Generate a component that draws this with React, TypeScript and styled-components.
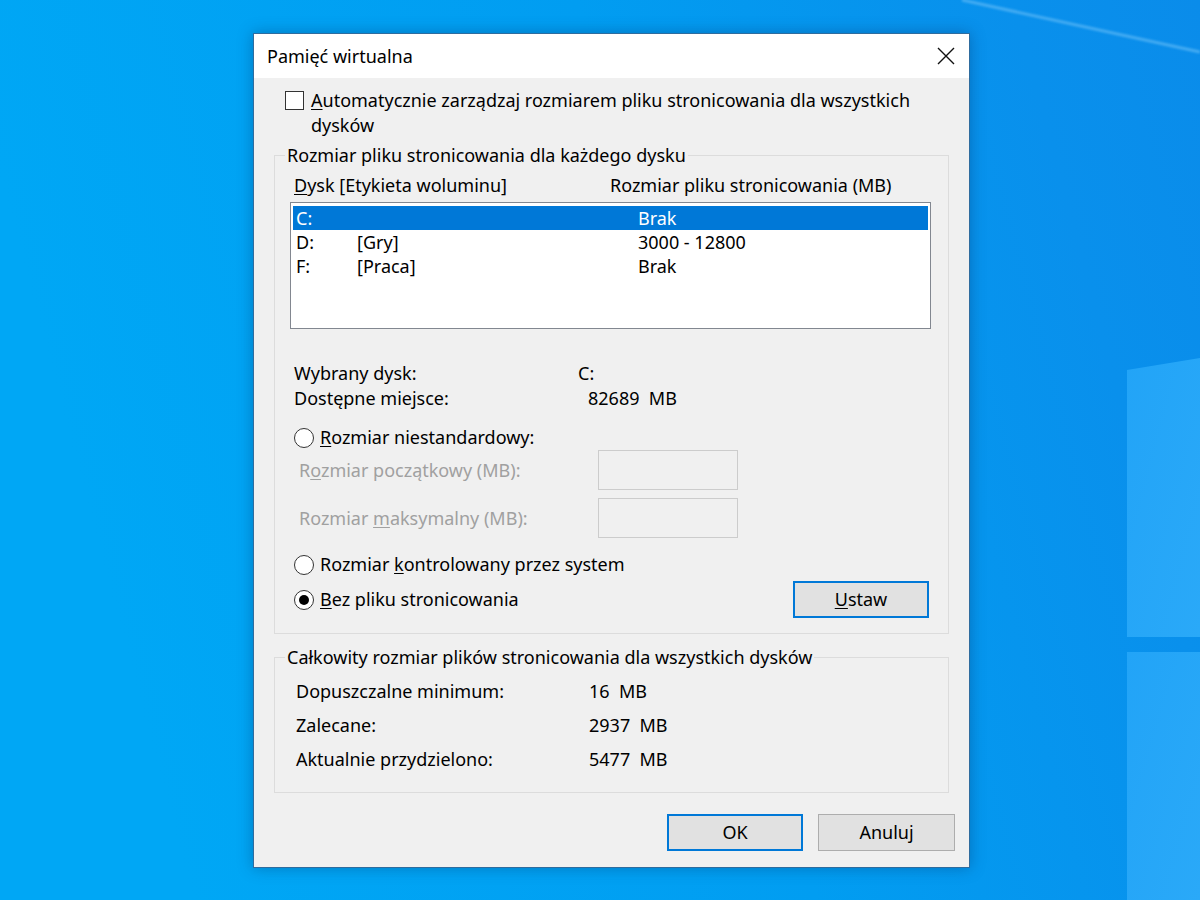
import * as React from 'react';
import styled, { createGlobalStyle } from 'styled-components';

const GlobalStyle = createGlobalStyle`
  html, body {
    margin: 0;
    padding: 0;
  }
  body {
    font-family: 'Segoe UI', 'Noto Sans', 'DejaVu Sans', sans-serif;
    color: #000;
  }
`;

const Desktop = styled.div`
  position: relative;
  width: 1200px;
  height: 900px;
  overflow: hidden;
  box-sizing: border-box;
  padding: 33px 0 0 253px;
  background: #039cef;
`;

// wallpaper lies under the dialog
const Wallpaper = styled.svg`
  position: absolute;
  left: 0;
  top: 0;
  z-index: 0;
`;

const Dialog = styled.div`
  position: relative;
  z-index: 1;
  width: 717px;
  height: 835px;
  box-sizing: border-box;
  display: flex;
  flex-direction: column;
  background: #f0f0f0;
  border: 1px solid #2f6c9e;
  box-shadow: 0 0 14px rgba(0, 40, 90, 0.35);
`;

const TitleBar = styled.div`
  height: 44px;
  display: flex;
  align-items: center;
  justify-content: space-between;
  background: #fff;
  padding-left: 13px;
`;

const Title = styled.span`
  font-size: 18px;
`;

const CloseButton = styled.div`
  width: 46px;
  height: 44px;
  display: flex;
  align-items: center;
  justify-content: center;
`;

const Body = styled.div`
  flex: 1;
  display: flex;
  flex-direction: column;
  padding: 0 14px 17px 20px;
  font-size: 18px;
  line-height: 25px;
`;

const Key = styled.u`
  text-decoration-thickness: 1px;
  text-underline-offset: 2px;
`;

const CheckRow = styled.div`
  display: flex;
  align-items: flex-start;
  margin: 10px 0 0 11px;
`;

const CheckBox = styled.span`
  flex: none;
  width: 19px;
  height: 19px;
  box-sizing: border-box;
  margin-top: 3px;
  border: 1px solid #333;
  background: #fff;
`;

const CheckLabel = styled.span`
  margin-left: 7px;
  width: 620px;
`;

const GroupBox = styled.fieldset<{ $top: number; $bottom: number }>`
  margin: ${(p) => p.$top}px 6px 0 0;
  padding: 0 17px ${(p) => p.$bottom}px 15px;
  border: 1px solid #dcdcdc;
  min-width: 0;
`;

const Legend = styled.legend`
  padding: 0 2px;
  margin-left: -5px;
  line-height: 22px;
`;

const ColumnHeader = styled.div`
  display: grid;
  grid-template-columns: 316px 1fr;
  padding-left: 4px;
  margin-top: 8px;
  line-height: 22px;
`;

const ListBox = styled.div`
  margin-top: 6px;
  height: 127px;
  box-sizing: border-box;
  border: 1px solid #828790;
  background: #fff;
  padding: 3px 2px;
`;

const ListRow = styled.div<{ $selected?: boolean }>`
  display: grid;
  grid-template-columns: 61px 281px 1fr;
  height: 24px;
  line-height: 24px;
  padding-left: 3px;
  background: ${(p) => (p.$selected ? '#0078d7' : 'transparent')};
  color: ${(p) => (p.$selected ? '#fff' : '#000')};
`;

const InfoGrid = styled.div`
  display: grid;
  grid-template-columns: 284px 1fr;
  padding-left: 4px;
  margin-top: 32px;
`;

const InfoValue = styled.span<{ $shift?: number }>`
  padding-left: ${(p) => p.$shift || 0}px;
  white-space: pre;
`;

const RadioRow = styled.div<{ $top: number }>`
  display: flex;
  align-items: center;
  margin-top: ${(p) => p.$top}px;
  padding-left: 4px;
`;

const RadioCircle = styled.span<{ $checked?: boolean }>`
  flex: none;
  width: 20px;
  height: 20px;
  box-sizing: border-box;
  border: 1px solid #333;
  border-radius: 50%;
  background: #fff;
  display: flex;
  align-items: center;
  justify-content: center;
  margin-right: 6px;
  &::after {
    content: '';
    width: 10px;
    height: 10px;
    border-radius: 50%;
    background: #000;
    display: ${(p) => (p.$checked ? 'block' : 'none')};
  }
`;

const SizeRow = styled.div<{ $top: number }>`
  display: grid;
  grid-template-columns: 299px 140px;
  align-items: center;
  margin-top: ${(p) => p.$top}px;
  padding-left: 9px;
  color: #a0a0a0;
`;

const SizeInput = styled.div`
  height: 40px;
  box-sizing: border-box;
  border: 1px solid #cccccc;
  background: #f0f0f0;
`;

const LastRow = styled.div`
  display: flex;
  align-items: center;
  justify-content: space-between;
  margin-top: 4px;
  padding-right: 2px;
`;

const Button = styled.div<{ $default?: boolean; $w: number }>`
  width: ${(p) => p.$w}px;
  height: 37px;
  box-sizing: border-box;
  display: flex;
  align-items: center;
  justify-content: center;
  background: #e1e1e1;
  border: ${(p) => (p.$default ? '2px solid #0078d7' : '1px solid #adadad')};
`;

const TotalRow = styled.div<{ $first?: boolean }>`
  display: grid;
  grid-template-columns: 293px 1fr;
  padding-left: 6px;
  line-height: 34px;
  margin-top: ${(p) => (p.$first ? 6 : 0)}px;
  white-space: pre;
`;

const ButtonBar = styled.div`
  display: flex;
  justify-content: flex-end;
  gap: 15px;
  margin-top: 21px;
`;

const CloseIcon = () => (
  <svg width='18' height='18' viewBox='0 0 18 18'>
    <path d='M1 1 L17 17 M17 1 L1 17' stroke='#111' strokeWidth='1.4' fill='none' />
  </svg>
);

const WallpaperArt = () => (
  <Wallpaper width='1200' height='900' viewBox='0 0 1200 900'>
    <defs>
      <linearGradient id='wall' x1='0' y1='0.2' x2='1' y2='0'>
        <stop offset='0' stopColor='#00a7f5' />
        <stop offset='0.5' stopColor='#019df1' />
        <stop offset='0.85' stopColor='#0990ec' />
        <stop offset='1' stopColor='#0a8cea' />
      </linearGradient>
      <linearGradient id='pane' x1='0' y1='0' x2='1' y2='1'>
        <stop offset='0' stopColor='#22a4f7' />
        <stop offset='1' stopColor='#2aa9f8' />
      </linearGradient>
      <filter id='soft'>
        <feGaussianBlur stdDeviation='1.2' />
      </filter>
    </defs>
    <rect width='1200' height='900' fill='url(#wall)' />
    <line x1='962' y1='0' x2='1200' y2='52' stroke='#52b4f5' strokeWidth='3' opacity='0.8' filter='url(#soft)' />
    <polygon points='1127,370 1200,358 1200,637 1127,637' fill='url(#pane)' />
    <polygon points='1127,652 1200,652 1200,900 1127,900' fill='url(#pane)' />
    <line x1='1128.5' y1='370' x2='1128.5' y2='637' stroke='#4fd8ff' strokeWidth='3' filter='url(#soft)' />
    <line x1='1128.5' y1='652' x2='1128.5' y2='900' stroke='#45e2ff' strokeWidth='3' filter='url(#soft)' />
  </Wallpaper>
);

export default function App() {
  return (
    <>
      <GlobalStyle />
      <Desktop>
        <WallpaperArt />
        <Dialog>
          <TitleBar>
            <Title>Pamięć wirtualna</Title>
            <CloseButton>
              <CloseIcon />
            </CloseButton>
          </TitleBar>
          <Body>
            <CheckRow>
              <CheckBox />
              <CheckLabel>
                <Key>A</Key>utomatycznie zarządzaj rozmiarem pliku stronicowania dla wszystkich dysków
              </CheckLabel>
            </CheckRow>

            <GroupBox $top={6} $bottom={15}>
              <Legend>Rozmiar pliku stronicowania dla każdego dysku</Legend>
              <ColumnHeader>
                <span>
                  <Key>D</Key>ysk [Etykieta woluminu]
                </span>
                <span>Rozmiar pliku stronicowania (MB)</span>
              </ColumnHeader>
              <ListBox>
                <ListRow $selected>
                  <span>C:</span>
                  <span />
                  <span>Brak</span>
                </ListRow>
                <ListRow>
                  <span>D:</span>
                  <span>[Gry]</span>
                  <span>3000 - 12800</span>
                </ListRow>
                <ListRow>
                  <span>F:</span>
                  <span>[Praca]</span>
                  <span>Brak</span>
                </ListRow>
              </ListBox>

              <InfoGrid>
                <span>Wybrany dysk:</span>
                <InfoValue>C:</InfoValue>
                <span>Dostępne miejsce:</span>
                <InfoValue $shift={10}>82689  MB</InfoValue>
              </InfoGrid>

              <RadioRow $top={14}>
                <RadioCircle />
                <span>
                  <Key>R</Key>ozmiar niestandardowy:
                </span>
              </RadioRow>
              <SizeRow $top={0}>
                <span>
                  R<Key>o</Key>zmiar początkowy (MB):
                </span>
                <SizeInput />
              </SizeRow>
              <SizeRow $top={8}>
                <span>
                  Rozmiar <Key>m</Key>aksymalny (MB):
                </span>
                <SizeInput />
              </SizeRow>
              <RadioRow $top={14}>
                <RadioCircle />
                <span>
                  Rozmiar <Key>k</Key>ontrolowany przez system
                </span>
              </RadioRow>
              <LastRow>
                <RadioRow $top={0}>
                  <RadioCircle $checked />
                  <span>
                    <Key>B</Key>ez pliku stronicowania
                  </span>
                </RadioRow>
                <Button $default $w={136}>
                  <span>
                    <Key>U</Key>staw
                  </span>
                </Button>
              </LastRow>
            </GroupBox>

            <GroupBox $top={12} $bottom={16}>
              <Legend>Całkowity rozmiar plików stronicowania dla wszystkich dysków</Legend>
              <TotalRow $first>
                <span>Dopuszczalne minimum:</span>
                <span>16  MB</span>
              </TotalRow>
              <TotalRow>
                <span>Zalecane:</span>
                <span>2937  MB</span>
              </TotalRow>
              <TotalRow>
                <span>Aktualnie przydzielono:</span>
                <span>5477  MB</span>
              </TotalRow>
            </GroupBox>

            <ButtonBar>
              <Button $default $w={136}>OK</Button>
              <Button $w={137}>Anuluj</Button>
            </ButtonBar>
          </Body>
        </Dialog>
      </Desktop>
    </>
  );
}
